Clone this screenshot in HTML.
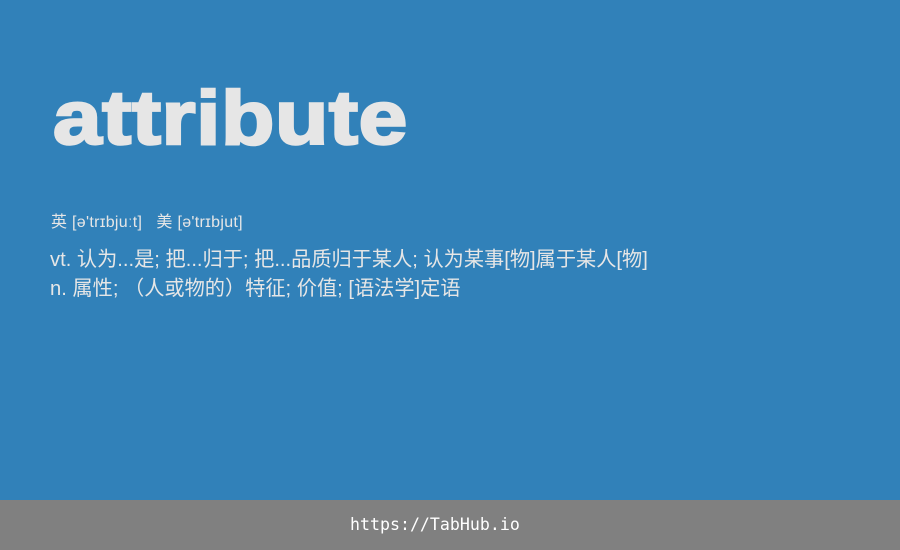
<!DOCTYPE html>
<html><head><meta charset="utf-8"><style>
html,body{margin:0;padding:0}
body{width:900px;height:550px;background:#3181b9;position:relative;overflow:hidden;font-family:"Liberation Sans","Noto Sans CJK SC",sans-serif;color:#e6e6e6}
.t{position:absolute;left:53px;top:81px;font-size:76px;font-weight:bold;line-height:76px;-webkit-text-stroke:2.5px #e6e6e6;transform:scaleX(1.15);transform-origin:0 0;letter-spacing:0.5px;white-space:nowrap}
.p{position:absolute;left:51px;top:213px;font-size:16px;line-height:20px;letter-spacing:0.3px;white-space:nowrap}
.d{position:absolute;left:50px;top:246px;font-size:20.2px;line-height:29px;white-space:nowrap}
.f{position:absolute;left:0;top:500px;width:900px;height:50px;background:#808080}
.f span{position:absolute;left:350px;top:0;color:#fff;font-family:"DejaVu Sans Mono",monospace;font-size:16.6px;line-height:50px}
</style></head><body>
<div class="t">attribute</div>
<div class="p">英 [ə'trɪbjuːt]&nbsp;&nbsp;&nbsp;美 [ə'trɪbjut]</div>
<div class="d">vt. 认为...是; 把...归于; 把...品质归于某人; 认为某事[物]属于某人[物]<br>n. 属性; （人或物的）特征; 价值; [语法学]定语</div>
<div class="f"><span>https://TabHub.io</span></div>
</body></html>
